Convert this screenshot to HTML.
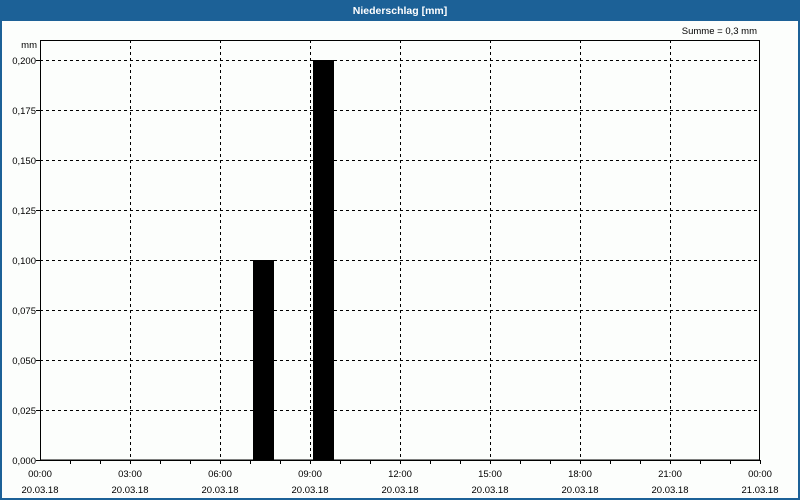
<!DOCTYPE html>
<html><head><meta charset="utf-8"><style>
html,body{margin:0;padding:0;}
body{width:800px;height:500px;overflow:hidden;background:#fcfefc;font-family:"Liberation Sans",sans-serif;}
</style></head><body>
<svg width="800" height="500" xmlns="http://www.w3.org/2000/svg" style="display:block" font-family="Liberation Sans, sans-serif">
<rect x="0" y="0" width="800" height="500" fill="#fcfefc"/>
<rect x="0" y="0" width="800" height="21" fill="#1c6197"/>
<rect x="0" y="0" width="2" height="500" fill="#1c6197"/>
<rect x="798" y="0" width="2" height="500" fill="#1c6197"/>
<rect x="0" y="498" width="800" height="2" fill="#1c6197"/>
<text x="400" y="14" fill="#fff" font-size="10.5" font-weight="bold" text-anchor="middle">Niederschlag [mm]</text>
<text x="757" y="34" font-size="9.5" text-anchor="end" fill="#000">Summe = 0,3 mm</text>
<text x="37" y="48" font-size="9.5" text-anchor="end" fill="#000">mm</text>
<g stroke="#000" stroke-width="1" stroke-dasharray="3,3" shape-rendering="crispEdges">
<path d="M40 60.5H760M40 110.5H760M40 160.5H760M40 210.5H760M40 260.5H760M40 310.5H760M40 360.5H760M40 410.5H760"/>
<path d="M130.5 40V460M220.5 40V460M310.5 40V460M400.5 40V460M490.5 40V460M580.5 40V460M670.5 40V460"/>
</g>
<g fill="#000">
<rect x="253" y="260" width="21" height="200"/>
<rect x="313" y="60" width="21" height="400"/>
</g>
<g stroke="#000" stroke-width="1" fill="none" shape-rendering="crispEdges">
<rect x="40.5" y="40.5" width="719" height="419.5"/>
<path d="M40 460.5H760"/>
<path d="M36 60.5H40M36 110.5H40M36 160.5H40M36 210.5H40M36 260.5H40M36 310.5H40M36 360.5H40M36 410.5H40M36 460.5H40"/>
<path d="M70.5 460V464M100.5 460V464M130.5 460V464M160.5 460V464M190.5 460V464M220.5 460V464M250.5 460V464M280.5 460V464M310.5 460V464M340.5 460V464M370.5 460V464M400.5 460V464M430.5 460V464M460.5 460V464M490.5 460V464M520.5 460V464M550.5 460V464M580.5 460V464M610.5 460V464M640.5 460V464M670.5 460V464M700.5 460V464M730.5 460V464M760.5 460V464"/>
</g>
<g font-size="9.5" text-anchor="end" fill="#000">
<text x="36" y="64">0,200</text><text x="36" y="114">0,175</text><text x="36" y="164">0,150</text>
<text x="36" y="214">0,125</text><text x="36" y="264">0,100</text><text x="36" y="314">0,075</text>
<text x="36" y="364">0,050</text><text x="36" y="414">0,025</text><text x="36" y="464">0,000</text>
</g>
<g font-size="9.5" text-anchor="middle" fill="#000">
<text x="40" y="477">00:00</text><text x="40" y="493">20.03.18</text>
<text x="130" y="477">03:00</text><text x="130" y="493">20.03.18</text>
<text x="220" y="477">06:00</text><text x="220" y="493">20.03.18</text>
<text x="310" y="477">09:00</text><text x="310" y="493">20.03.18</text>
<text x="400" y="477">12:00</text><text x="400" y="493">20.03.18</text>
<text x="490" y="477">15:00</text><text x="490" y="493">20.03.18</text>
<text x="580" y="477">18:00</text><text x="580" y="493">20.03.18</text>
<text x="670" y="477">21:00</text><text x="670" y="493">20.03.18</text>
<text x="760" y="477">00:00</text><text x="760" y="493">21.03.18</text>
</g>
</svg>
</body></html>
